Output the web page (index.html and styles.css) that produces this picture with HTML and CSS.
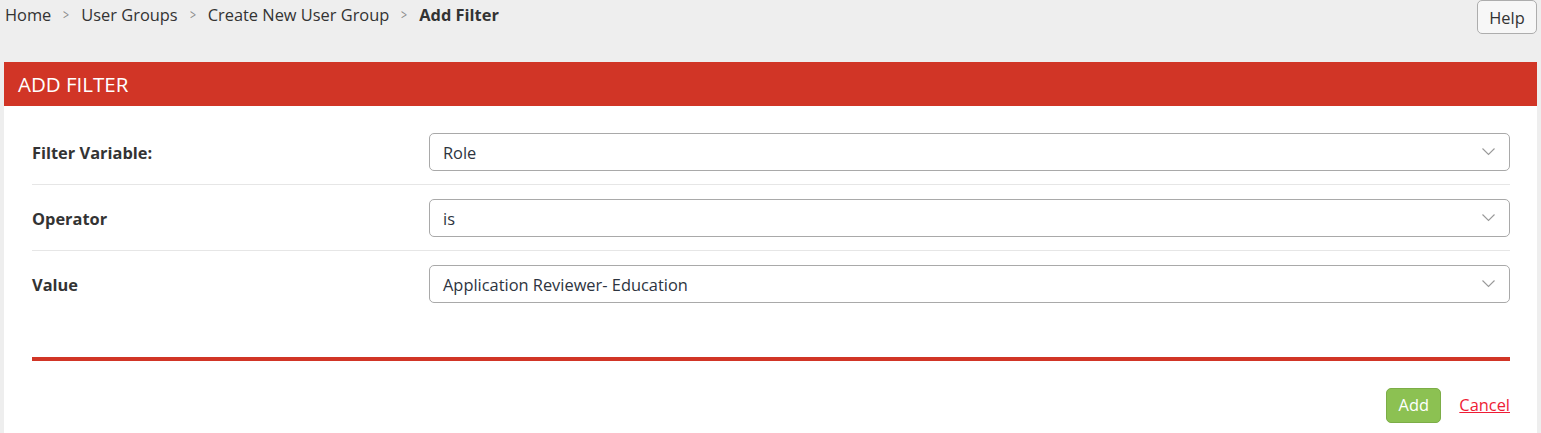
FILE: index.html
```html
<!DOCTYPE html>
<html>
<head>
<meta charset="utf-8">
<link rel="stylesheet" href="styles.css">
</head>
<body>
<div class="topbar">
  <nav class="crumbs">
    <span class="crumb">Home</span>
    <span class="sep">&gt;</span>
    <span class="crumb">User Groups</span>
    <span class="sep">&gt;</span>
    <span class="crumb">Create New User Group</span>
    <span class="sep">&gt;</span>
    <span class="crumb current">Add Filter</span>
  </nav>
  <button class="help">Help</button>
</div>
<div class="panel">
  <div class="panel-head">ADD FILTER</div>
  <div class="panel-body">
    <div class="row">
      <div class="label">Filter Variable:</div>
      <div class="select"><span>Role</span><svg class="chev" width="13" height="8" viewBox="0 0 13 8"><polyline points="0.5,0.5 6.5,6.5 12.5,0.5" fill="none" stroke="#999999" stroke-width="1.1"/></svg></div>
    </div>
    <div class="row">
      <div class="label">Operator</div>
      <div class="select"><span>is</span><svg class="chev" width="13" height="8" viewBox="0 0 13 8"><polyline points="0.5,0.5 6.5,6.5 12.5,0.5" fill="none" stroke="#999999" stroke-width="1.1"/></svg></div>
    </div>
    <div class="row last">
      <div class="label">Value</div>
      <div class="select"><span>Application Reviewer- Education</span><svg class="chev" width="13" height="8" viewBox="0 0 13 8"><polyline points="0.5,0.5 6.5,6.5 12.5,0.5" fill="none" stroke="#999999" stroke-width="1.1"/></svg></div>
    </div>
    <div class="divider"></div>
    <div class="actions">
      <button class="add">Add</button>
      <a class="cancel" href="#">Cancel</a>
    </div>
  </div>
</div>
</body>
</html>
```

FILE: styles.css
```css
html, body {
  margin: 0;
  padding: 0;
  background: #eeeeee;
  font-family: "Open Sans", "Liberation Sans", sans-serif;
  font-size: 16.4px;
  color: #333333;
}
.topbar {
  display: flex;
  justify-content: space-between;
  align-items: flex-start;
  height: 62px;
  padding: 0 4px 0 5px;
}
.crumbs {
  display: flex;
  align-items: center;
  line-height: 29px;
}
.sep {
  color: #8a8a8a;
  font-size: 14px;
  margin: 0 11px 0 11px;
  transform: scaleX(0.75);
}
.crumb.current {
  font-weight: bold;
}
.help {
  margin-top: 0;
  height: 34px;
  width: 60px;
  font-family: "Open Sans", "Liberation Sans", sans-serif;
  font-size: 16.4px;
  color: #333333;
  background: #f7f7f7;
  border: 1px solid #adadad;
  border-radius: 5px;
  padding: 0;
}
.panel {
  margin: 0 4px;
  background: #ffffff;
  height: 371px;
}
.panel-head {
  background: #d13526;
  color: #ffffff;
  height: 44px;
  line-height: 44px;
  padding-left: 14px;
  font-size: 20.5px;
}
.panel-body {
  padding: 13px 27px 0 28px;
}
.row {
  display: grid;
  grid-template-columns: 397px 1fr;
  align-items: center;
  padding: 14px 0 13px;
  border-bottom: 1px solid #e6e6e6;
}
.row.last {
  border-bottom: none;
}
.label {
  font-weight: bold;
}
.select {
  height: 36px;
  border: 1px solid #a9a9a9;
  border-radius: 5px;
  display: flex;
  align-items: center;
  justify-content: space-between;
  padding: 0 14px 0 13px;
  color: #2d3440;
}
.chev {
  display: block;
}
.divider {
  margin-top: 41px;
  height: 4px;
  background: #d13526;
}
.actions {
  display: flex;
  justify-content: flex-end;
  align-items: center;
  gap: 18px;
  margin-top: 27px;
}
.add {
  width: 55px;
  height: 35px;
  background: #8cc152;
  border: 1px solid #7cad47;
  border-radius: 5px;
  color: #ffffff;
  font-family: "Open Sans", "Liberation Sans", sans-serif;
  font-size: 16.4px;
  line-height: 31px;
  padding: 0 0 2px;
}
.cancel {
  color: #ee1c35;
  text-decoration: underline;
  margin-top: -2px;
}
```
